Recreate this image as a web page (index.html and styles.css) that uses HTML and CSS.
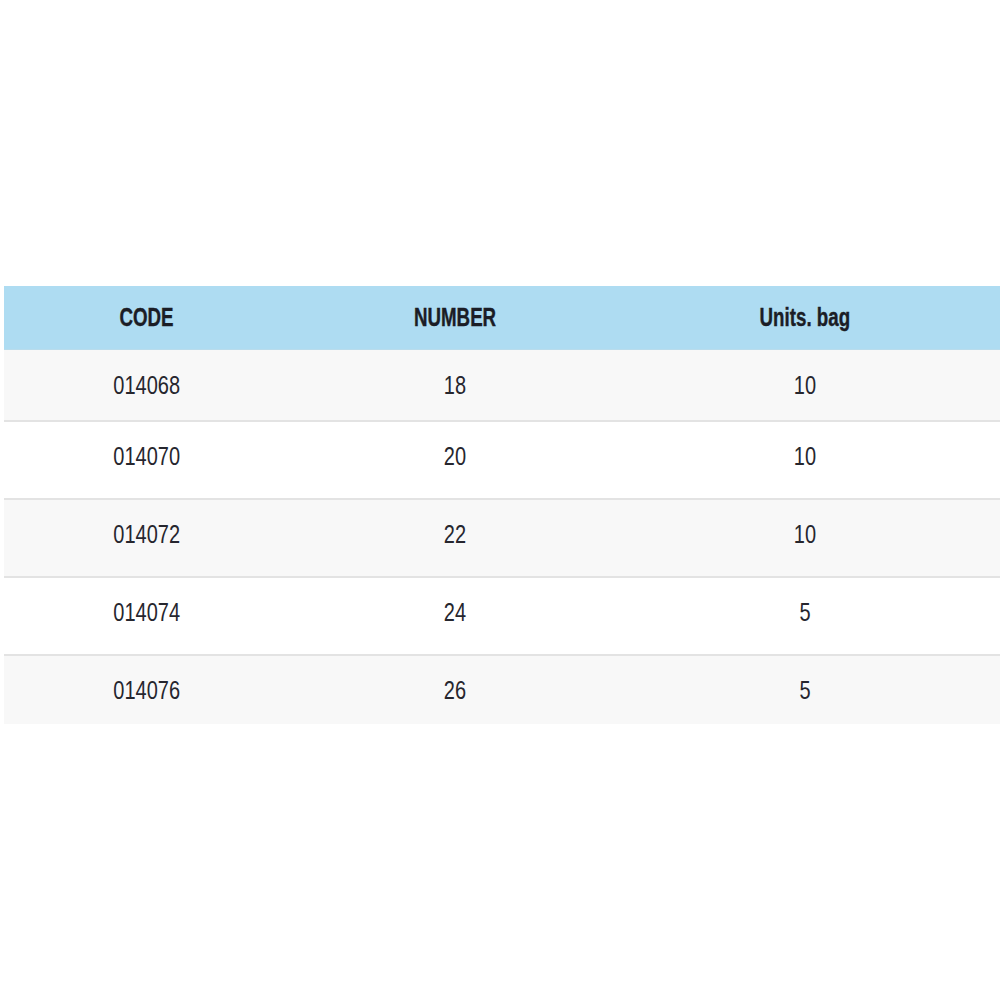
FILE: index.html
```html
<!DOCTYPE html>
<html>
<head>
<meta charset="utf-8">
<link rel="stylesheet" href="styles.css">
</head>
<body>
<div class="wrap">
  <table class="spec">
    <colgroup>
      <col class="c1"><col class="c2"><col class="c3">
    </colgroup>
    <thead>
      <tr><th><span class="t">CODE</span></th><th><span class="t">NUMBER</span></th><th><span class="t">Units. bag</span></th></tr>
    </thead>
    <tbody>
      <tr class="first alt"><td><span class="t">014068</span></td><td><span class="t">18</span></td><td><span class="t">10</span></td></tr>
      <tr class="mid"><td><span class="t">014070</span></td><td><span class="t">20</span></td><td><span class="t">10</span></td></tr>
      <tr class="mid alt"><td><span class="t">014072</span></td><td><span class="t">22</span></td><td><span class="t">10</span></td></tr>
      <tr class="mid"><td><span class="t">014074</span></td><td><span class="t">24</span></td><td><span class="t">5</span></td></tr>
      <tr class="alt last"><td><span class="t">014076</span></td><td><span class="t">26</span></td><td><span class="t">5</span></td></tr>
    </tbody>
  </table>
</div>
</body>
</html>
```
FILE: styles.css
```css
html, body {
  margin: 0;
  padding: 0;
  background: #ffffff;
}
.wrap {
  padding: 286px 0 0 4px;
}
.spec {
  width: 996px;
  border-collapse: collapse;
  table-layout: fixed;
  font-family: "Liberation Sans", Arial, sans-serif;
  color: #26262e;
}
.c1 { width: 286px; }
.c2 { width: 330px; }
.c3 { width: 380px; }
.t {
  display: inline-block;
  transform: scaleX(0.8);
  transform-origin: center;
  white-space: nowrap;
}
.spec th {
  background: #aedcf2;
  height: 63px;
  padding: 0;
  font-size: 26px;
  font-weight: bold;
  text-align: center;
  color: #1b1d26;
  border-bottom: 1px solid #b9dcec;
  -webkit-text-stroke: 0.4px #1b1d26;
}
.spec th .t {
  transform: scaleX(0.72);
}
.spec th:nth-child(3), .spec td:nth-child(3) {
  padding-right: 10px;
}
.spec td {
  height: 68px;
  padding: 0 0 8px 0;
  font-size: 25px;
  text-align: center;
  border-top: 2px solid #e3e3e3;
}
.spec tr.first td {
  height: 70px;
  padding-bottom: 0;
  border-top: none;
}
.spec tr.last td {
  height: 68px;
  padding-bottom: 0;
}
.spec tr.alt td {
  background: #f8f8f8;
}
```
